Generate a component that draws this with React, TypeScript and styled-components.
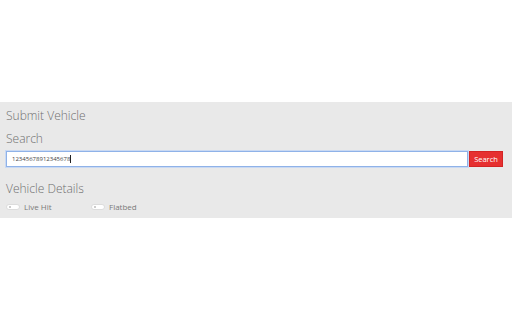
import React from "react";
import styled, { createGlobalStyle } from "styled-components";

const Global = createGlobalStyle`
  html, body { margin: 0; padding: 0; background: #ffffff; }
  body { font-family: "Open Sans", "Liberation Sans", sans-serif; }
`;

const Page = styled.div`
  width: 512px;
  height: 320px;
  display: flex;
  flex-direction: column;
  padding-top: 102px;
  box-sizing: border-box;
`;

const Panel = styled.div`
  background: #e9e9e9;
  height: 116px;
  box-sizing: border-box;
  padding: 6px 9px 0 6px;
  display: flex;
  flex-direction: column;
`;

const Heading = styled.div<{ $mt?: number }>`
  font-size: 12px;
  line-height: 16px;
  font-weight: 300;
  color: #6f6f6f;
  margin-top: ${(p) => p.$mt ?? 0}px;
`;

const SearchRow = styled.div`
  display: flex;
  align-items: stretch;
  margin-top: 4px;
  height: 16px;
`;

const Input = styled.div`
  flex: 1;
  background: #ffffff;
  border: 1px solid #8fb2e8;
  box-shadow: 0 0 0 1px #c9d9f3;
  box-sizing: border-box;
  font-size: 6px;
  color: #444;
  display: flex;
  align-items: center;
  padding-left: 5px;
`;

const Caret = styled.span`
  display: inline-block;
  width: 1px;
  height: 8px;
  background: #222;
`;

const Button = styled.div`
  width: 34px;
  background: #e63030;
  border: 1px solid #d32424;
  box-sizing: border-box;
  color: #fff;
  font-size: 7.5px;
  display: flex;
  align-items: center;
  justify-content: center;
  margin-left: 1px;
`;

const Toggles = styled.div`
  display: flex;
  margin-top: 4px;
`;

const ToggleGroup = styled.div`
  display: flex;
  align-items: center;
  width: 85px;
  gap: 4px;
`;

const Switch = styled.div`
  width: 14px;
  height: 6px;
  border-radius: 3px;
  background: #ffffff;
  border: 1px solid #dcdcdc;
  box-sizing: border-box;
  position: relative;
`;

const Knob = styled.div`
  position: absolute;
  left: 2px;
  top: 1px;
  width: 2px;
  height: 2px;
  border-radius: 50%;
  background: #bdbdbd;
`;

const Label = styled.span`
  font-size: 8px;
  color: #7a7a7a;
`;

export default function App() {
  return (
    <>
      <Global />
      <Page>
        <Panel>
          <Heading>Submit Vehicle</Heading>
          <Heading $mt={7}>Search</Heading>
          <SearchRow>
            <Input>
              12345678912345678
              <Caret />
            </Input>
            <Button>Search</Button>
          </SearchRow>
          <Heading $mt={14}>Vehicle Details</Heading>
          <Toggles>
            <ToggleGroup>
              <Switch>
                <Knob />
              </Switch>
              <Label>Live Hit</Label>
            </ToggleGroup>
            <ToggleGroup>
              <Switch>
                <Knob />
              </Switch>
              <Label>Flatbed</Label>
            </ToggleGroup>
          </Toggles>
        </Panel>
      </Page>
    </>
  );
}
